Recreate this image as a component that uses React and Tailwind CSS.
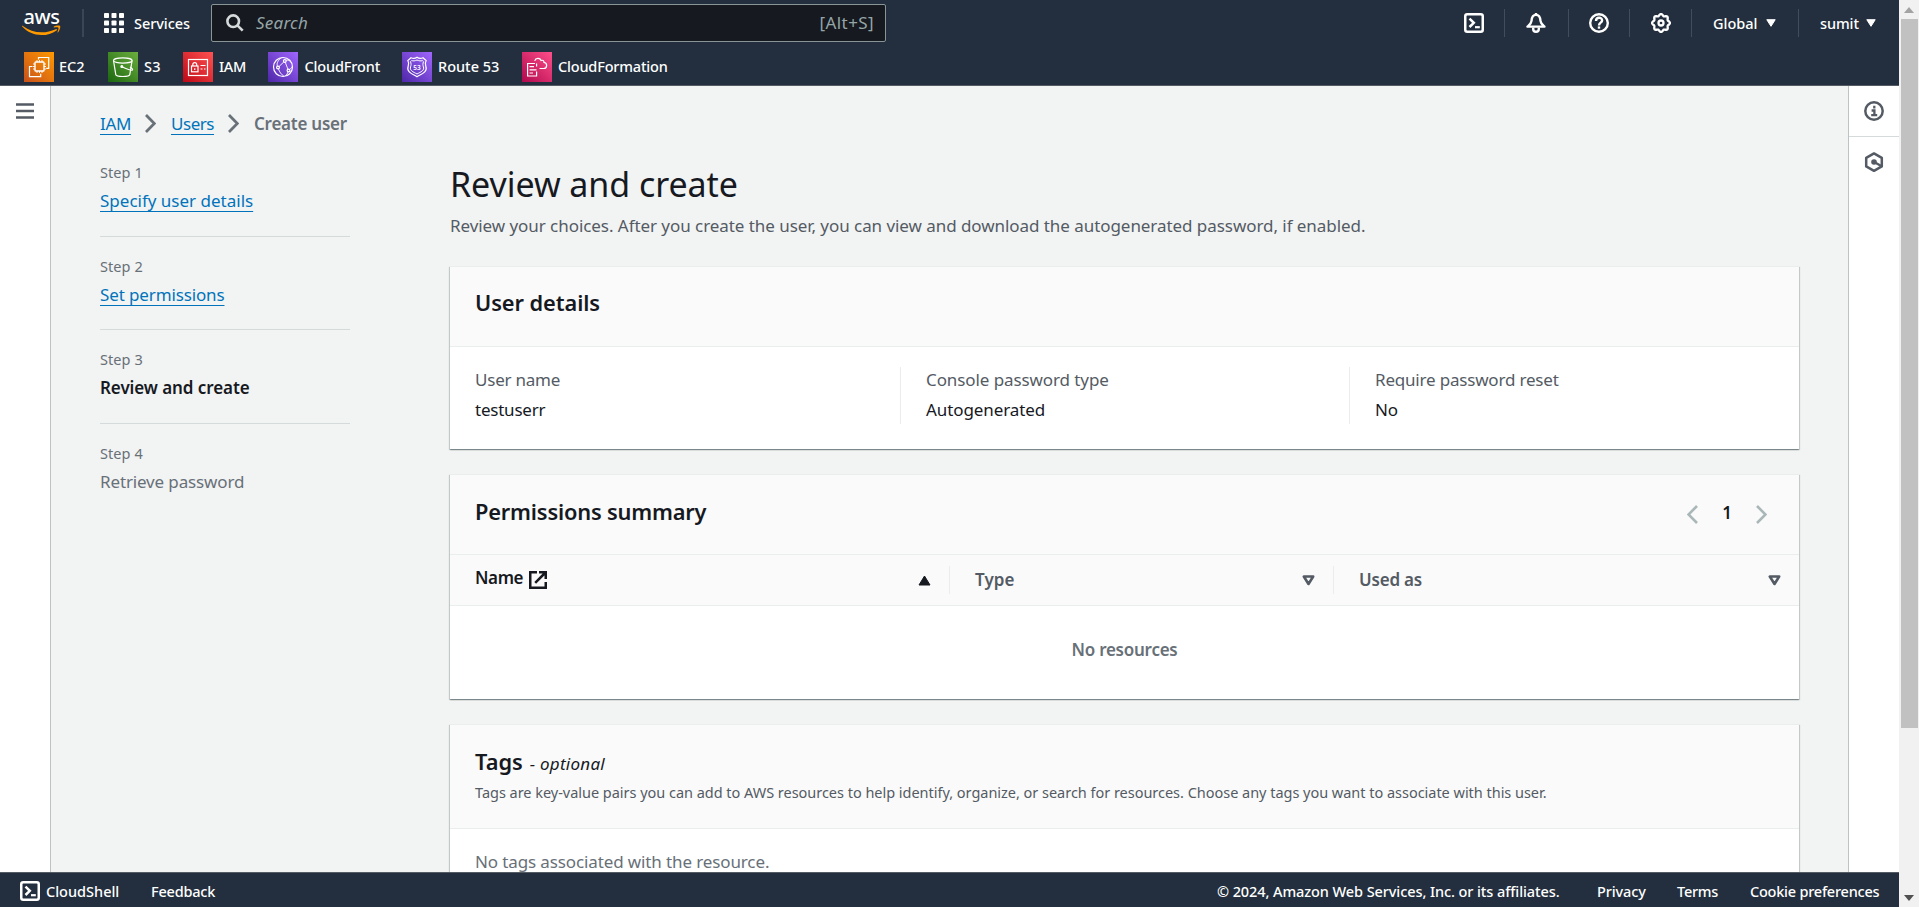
const gearPath = (() => {
  const points = [];
  for (let i = 0; i < 96; i += 1) {
    const a = (i / 96) * Math.PI * 2;
    const r = 8.1 + 0.85 * Math.cos(a * 8);
    points.push(`${(10 + r * Math.sin(a)).toFixed(2)} ${(10 - r * Math.cos(a)).toFixed(2)}`);
  }
  return `M${points.join('L')}Z`;
})();

/* ---------- glyph icons ---------- */

function AwsLogo() {
  return (
    <svg className="h-10 w-[42px] shrink-0" viewBox="0 -5 42 40">
      <text x="2.4" y="15.8" fill="#fff" fontSize="20" fontWeight="500" textLength="36.5" fontFamily="Noto Sans, sans-serif">
        aws
      </text>
      <path d="M1.2 18.6c5.2 5.6 11.6 8.5 19.2 8.5 5.6 0 10.8-1.7 15.2-4.7.9-.6.1-1.700-.9-1.200-4.600 2.100-9.200 3.100-13.900 3.100-7.300 0-13.300-2.200-18.900-6.300-.6-.4-1.100.1-.7.6z" fill="#ff9900" />
      <path d="M32.800 18.700c2.200-1.500 5.800-1.200 6.300-.7.500.6-.1 4.300-2 6.200-.4.400-.800.200-.600-.300.600-1.500 1.300-3.600.900-4.200-.5-.6-2.700-.4-4.200-.3-.6.100-.7-.4-.4-.7z" fill="#ff9900" />
    </svg>
  );
}

function GridIcon() {
  const stops = [0, 7.5, 15];
  return (
    <svg className="size-5" viewBox="0 0 20 20" fill="#fff">
      {stops.map((y) => stops.map((x) => <rect key={`${x}-${y}`} x={x} y={y} width="5" height="5" rx="0.8" />))}
    </svg>
  );
}

function SearchIcon() {
  return (
    <svg className="size-[18px]" viewBox="0 0 18 18" fill="none" stroke="#d5dbdb" strokeWidth="2.6">
      <circle cx="7.2" cy="7.2" r="5.8" />
      <path d="M11.4 11.4l5.300 5.300" />
    </svg>
  );
}

function ShellIcon() {
  return (
    <svg className="size-5" viewBox="0 0 20 20" fill="none" stroke="#fff" strokeWidth="2.5" strokeLinejoin="round">
      <rect x="1.25" y="1.25" width="17.5" height="17.5" rx="2" />
      <path d="M5.500 5.600l4.300 4.200-4.300 4.200" strokeLinejoin="miter" />
      <path d="M11 14.200h4.800" strokeWidth="2.2" />
    </svg>
  );
}

function BellIcon() {
  return (
    <svg className="size-5" viewBox="0 0 20 20" fill="none" stroke="#fff" strokeWidth="2.4" strokeLinejoin="round">
      <path d="M10 1.900C6.800 1.900 5.700 4.500 5.500 8 5.300 10.500 3.800 11.500 1.500 13.600H18.500C16.200 11.500 14.700 10.500 14.500 8 14.300 4.500 13.200 1.900 10 1.900Z" />
      <path d="M10 0v2.500" />
      <path d="M7.200 14.500v1.400a2.800 2.800 0 0 0 5.600 0v-1.400" />
    </svg>
  );
}

function HelpIcon() {
  return (
    <svg className="size-5" viewBox="0 0 20 20" fill="none" stroke="#fff" strokeWidth="2.4">
      <circle cx="10" cy="10" r="8.8" />
      <path d="M7 8c0-4.200 6.100-4.200 6.100-.600 0 2.300-3.100 2.200-3.100 5" />
      <path d="M10 13.400v2.300" />
    </svg>
  );
}

function GearIcon() {
  return (
    <svg className="size-5" viewBox="0 0 20 20" fill="none" stroke="#fff" strokeWidth="2.3">
      <path d={gearPath} />
      <circle cx="10" cy="10" r="2.500" />
    </svg>
  );
}

function InfoIcon() {
  return (
    <svg className="size-5" viewBox="0 0 20 20" fill="none" stroke="#545b64" strokeWidth="2.5">
      <circle cx="10" cy="10" r="8.7" />
      <path d="M10.300 4.800v2.600M7.600 9.500h2.800v4.600M7.200 14.100h6" strokeWidth="2.3" />
    </svg>
  );
}

function HexagonIcon() {
  return (
    <svg className="size-5" viewBox="0 0 20 20" fill="none" stroke="#545b64" strokeWidth="2.500" strokeLinejoin="round">
      <path d="M10 1.400l7.800 4.400v8.600L10 18.800l-7.800-4.400V5.800z" />
      <circle cx="10" cy="10" r="2.800" fill="#545b64" stroke="none" />
      <path d="M10 10l7.300 4" />
    </svg>
  );
}

function MenuIcon() {
  return (
    <svg className="h-4 w-[18px]" viewBox="0 0 18 16" stroke="#545b64" strokeWidth="2.5">
      <path d="M0 1.500h18M0 8h18M0 14.500h18" />
    </svg>
  );
}

function CaretIcon() {
  return (
    <svg className="h-2 w-2.5 shrink-0" viewBox="0 0 10 8" fill="#fff" stroke="#fff" strokeWidth="1" strokeLinejoin="round">
      <path d="M.8.7h8.400L5 7.300z" />
    </svg>
  );
}

function CrumbChevron() {
  return (
    <svg className="h-[19px] w-[11px] shrink-0" viewBox="0 0 11 19" fill="none" stroke="#687078" strokeWidth="2.700">
      <path d="M1 1l8.300 8.500L1 18" />
    </svg>
  );
}

function PageChevron({ flip }) {
  return (
    <svg className="h-[19px] w-[11px] shrink-0" viewBox="0 0 11 19" fill="none" stroke="#aab7b8" strokeWidth="2.600">
      <path d={flip ? 'M1 1l8.500 8.500L1 18' : 'M10 1L1.500 9.500 10 18'} />
    </svg>
  );
}

function ExternalIcon() {
  return (
    <svg className="size-[18px] shrink-0" viewBox="0 0 18 18" fill="none" stroke="#16191f" strokeWidth="2.500">
      <path d="M8 1.250H1.250v15.500h15.500V11" />
      <path d="M10 1.250h6.750V8M16.500 1.500L6.200 11.800" />
    </svg>
  );
}

function SortAscending() {
  return (
    <svg className="h-[11px] w-[13px] shrink-0" viewBox="0 0 13 11" fill="#16191f" stroke="#16191f" strokeLinejoin="round">
      <path d="M6.500 1L12 10H1z" />
    </svg>
  );
}

function SortIdle() {
  return (
    <svg className="h-[11px] w-[13px] shrink-0" viewBox="0 0 13 11" fill="none" stroke="#545b64" strokeWidth="2.600" strokeLinejoin="round">
      <path d="M1.800 1.500h9.400L6.500 9z" />
    </svg>
  );
}

/* ---------- service tiles ---------- */

function Tile({ id, from, to, children }) {
  return (
    <svg className="size-[30px] shrink-0" viewBox="0 0 30 30" fill="none" stroke="#fff" strokeWidth="1.2">
      <defs>
        <linearGradient id={id} x1="0" y1="1" x2="1" y2="0">
          <stop offset="0" stopColor={from} />
          <stop offset="1" stopColor={to} />
        </linearGradient>
      </defs>
      <rect width="30" height="30" fill={`url(#${id})`} stroke="none" />
      {children}
    </svg>
  );
}

function Ec2Tile() {
  return (
    <Tile id="ec2" from="#c8511b" to="#ff9900">
      <path d="M14.500 7.500v-2h10.200v10.800h-2.500M8.500 14.500h-3v10.200h11.200v-3" />
      <rect x="11" y="10" width="9" height="9" rx="0.8" strokeWidth="1.400" />
      <path d="M13 10V8M15.500 10V8M18 10V8M13 21v-2M15.500 21v-2M18 21v-2M11 12H9M11 14.500H9M11 17H9M22 12h-2M22 14.500h-2M22 17h-2" strokeWidth="0.9" />
    </Tile>
  );
}

function S3Tile() {
  return (
    <Tile id="s3" from="#1b660f" to="#6cae3e">
      <ellipse cx="14.800" cy="8.500" rx="9.300" ry="2.600" />
      <path d="M5.500 8.500l2.300 14.200c.4 2.400 13.600 2.400 14 0l2.300-14.200" />
      <path d="M14 14.700c4 2.200 9.800 4.200 10.500 3.200.5-.900-1-2-2.500-3" />
      <circle cx="13.800" cy="14.500" r="0.9" fill="#fff" />
    </Tile>
  );
}

function IamTile() {
  return (
    <Tile id="iam" from="#bd0816" to="#ff5252">
      <rect x="5.500" y="7.500" width="19" height="16" />
      <rect x="8.500" y="14" width="6.500" height="5.800" />
      <path d="M9.800 14v-1.500c0-2.600 3.900-2.600 3.900 0V14M11.750 16.200v1.800M17.500 13.500h5M17.500 17h2M21 17h1.500" />
    </Tile>
  );
}

function CloudFrontTile() {
  return (
    <Tile id="cloudfront" from="#4d27a8" to="#a166ff">
      <circle cx="15" cy="15" r="9.500" />
      <circle cx="16.800" cy="9" r="1.400" />
      <circle cx="10" cy="15.500" r="1.400" />
      <circle cx="20.500" cy="18.500" r="1.400" />
      <path d="M15.700 10.100l-4.600 4.300M17.300 10.400l2.600 6.800M13.500 5.700c-3.500 2.500-5 5.500-4.200 8.300M10.500 17c1 3 2.800 5.400 5.500 7.400M18 8.200c2-.2 3.500.300 4.500 1M20 20c-.5 1.500-1.200 2.700-2.500 4M21.500 17.500c1.500-1 2.300-2 2.800-3.200" strokeWidth="0.9" />
    </Tile>
  );
}

function Route53Tile() {
  return (
    <Tile id="route53" from="#4d27a8" to="#a166ff">
      <path d="M15 5.300c-2 1.400-3.800 1.500-6 .400L5.800 8.500c1.300 2.200 1.300 3.500.4 5.700-2.200 5.300 3.500 7.600 8.800 10.500 5.300-2.900 11-5.200 8.800-10.500-.9-2.200-.9-3.500.4-5.700L21 5.700c-2.200 1.100-4 1-6-.4z" />
      <path d="M15 8c-2 1-3.800 1.100-5.400.600L8.500 9.700c.8 1.800.7 3.500.1 5.200-1.200 3.600 2.400 4.900 6.400 7.100 4-2.200 7.600-3.500 6.400-7.100-.6-1.700-.7-3.400.1-5.200l-1.100-1.100C18.800 9.100 17 9 15 8z" strokeWidth="1" />
      <text x="15" y="17.600" fill="#fff" stroke="none" fontSize="6.500" fontWeight="600" textAnchor="middle" fontFamily="Noto Sans, sans-serif">
        53
      </text>
    </Tile>
  );
}

function CloudFormationTile() {
  return (
    <Tile id="cloudformation" from="#b0084d" to="#ff4f8b">
      <path d="M13 11.500H5.600v12.500h9v-4.500M14.600 11.500v3" />
      <path d="M7.500 14.700h4.500M7.500 17.800h7M7.500 21h3.500" />
      <path d="M12.700 8.800c.9-3 5.300-3.200 6.400-.3 1.600-.7 2.900.2 2.900 1.900 3.600.5 3.500 6.100-.2 6.100h-4.300" />
    </Tile>
  );
}

/* ---------- chrome ---------- */

function Divider() {
  return <span className="h-7 w-px shrink-0 bg-[#414d5c]" />;
}

const favorites = [
  { name: 'EC2', icon: <Ec2Tile />, item: 'w-[84px] gap-[5px]', text: '' },
  { name: 'S3', icon: <S3Tile />, item: 'w-[75px] gap-[6px]', text: 'tracking-[0.2px]' },
  { name: 'IAM', icon: <IamTile />, item: 'w-[85px] gap-[6px]', text: 'tracking-[-0.3px]' },
  { name: 'CloudFront', icon: <CloudFrontTile />, item: 'w-[134px] gap-[6.5px]', text: 'tracking-[-0.15px]' },
  { name: 'Route 53', icon: <Route53Tile />, item: 'w-[120px] gap-[6px]', text: '' },
  { name: 'CloudFormation', icon: <CloudFormationTile />, item: 'gap-[6px]', text: 'tracking-[-0.18px]' },
];

function TopNav() {
  return (
    <header className="h-[86px] shrink-0 border-b border-[#545b64] bg-[#232f3e] text-[14.5px] leading-5 font-medium text-white">
      <div className="flex h-[46px] items-center pl-[21px]">
        <AwsLogo />
        <span className="ml-[19px] h-7 w-0.5 bg-[#3b4654]" />
        <div className="ml-5 flex w-[107px] items-center gap-2.5">
          <GridIcon />
          <span className="tracking-[-0.06px]">Services</span>
        </div>
        <div className="flex h-[38px] w-[675px] items-center justify-between rounded-[2px] border border-[#879596] bg-[#16191f] pr-[11px] pl-[14px] text-[17px] leading-[27px] font-normal">
          <div className="flex items-center gap-3">
            <SearchIcon />
            <span className="pb-px tracking-[0.23px] text-[#95a5a6] italic">Search</span>
          </div>
          <span className="pb-px tracking-[0.4px] text-[#95a5a6]">[Alt+S]</span>
        </div>
        <div className="ml-auto flex items-center">
          <ShellIcon />
          <span className="ml-5 flex"><Divider /></span>
          <span className="ml-[21px] flex"><BellIcon /></span>
          <span className="ml-[22px] flex"><Divider /></span>
          <span className="ml-5 flex"><HelpIcon /></span>
          <span className="ml-5 flex"><Divider /></span>
          <span className="ml-[21px] flex"><GearIcon /></span>
          <span className="ml-5 flex"><Divider /></span>
          <div className="ml-[21px] flex w-[85px] items-center">
            <span className="w-[53px]">Global</span>
            <CaretIcon />
          </div>
          <Divider />
          <div className="ml-[21px] flex w-[79px] items-center">
            <span className="w-[46px] tracking-[-0.1px]">sumit</span>
            <CaretIcon />
          </div>
        </div>
      </div>
      <nav className="flex h-[39px] items-center pt-[3px] pl-6">
        {favorites.map((f) => (
          <div key={f.name} className={`flex items-center ${f.item}`}>
            {f.icon}
            <span className={`pb-0.5 whitespace-nowrap ${f.text}`}>{f.name}</span>
          </div>
        ))}
      </nav>
    </header>
  );
}

const linkClass = 'text-[#0073bb] underline decoration-1 underline-offset-[4px] [text-decoration-skip-ink:none]';

const steps = [
  { label: 'Step 1', title: 'Specify user details', item: 'h-[75px] border-b', text: linkClass },
  { label: 'Step 2', title: 'Set permissions', item: 'h-[93px] border-b pt-[19px]', text: `${linkClass} tracking-[-0.13px]` },
  { label: 'Step 3', title: 'Review and create', item: 'h-[94px] border-b pt-[19px]', text: 'font-semibold text-[#16191f] tracking-[-0.08px]' },
  { label: 'Step 4', title: 'Retrieve password', item: 'pt-[19px]', text: 'text-[#687078] tracking-[-0.14px]' },
];

function Steps() {
  return (
    <nav className="w-[250px] shrink-0">
      {steps.map((s) => (
        <div key={s.label} className={`border-[#d5dbdb] ${s.item}`}>
          <div className="text-[14.5px] leading-5 tracking-[0.08px] text-[#687078]">{s.label}</div>
          <div className="mt-[5px] leading-[27px]">
            <span className={s.text}>{s.title}</span>
          </div>
        </div>
      ))}
    </nav>
  );
}

function Card({ className, children }) {
  return (
    <section
      className={`border-t border-[#eaeded] bg-white shadow-[0_1px_1px_0_rgba(0,28,36,0.3),1px_1px_1px_0_rgba(0,28,36,0.15),-1px_1px_1px_0_rgba(0,28,36,0.15)] ${className}`}
    >
      {children}
    </section>
  );
}

const details = [
  { label: 'User name', value: 'testuserr', item: 'w-[425px]', text: 'tracking-[-0.22px]' },
  { label: 'Console password type', value: 'Autogenerated', item: 'w-[449px] border-l pl-[25px]', text: 'tracking-[-0.09px]' },
  { label: 'Require password reset', value: 'No', item: 'border-l pl-[25px]', text: 'tracking-[-0.19px]' },
];

function UserDetails() {
  return (
    <Card className="mt-[27px] h-[183px]">
      <div className="h-20 border-b border-[#eaeded] bg-[#fafafa] pt-[21px] pl-[25px]">
        <h2 className="text-[21.8px] leading-[29px] font-semibold tracking-[-0.08px]">User details</h2>
      </div>
      <div className="flex pt-5 pl-[25px]">
        {details.map((d) => (
          <div key={d.label} className={`h-[57px] border-[#eaeded] ${d.item}`}>
            <div className={`-mt-px leading-[27px] text-[#545b64] ${d.text}`}>{d.label}</div>
            <div className={`mt-[3px] leading-[27px] ${d.text}`}>{d.value}</div>
          </div>
        ))}
      </div>
    </Card>
  );
}

function PermissionsSummary() {
  return (
    <Card className="mt-[25px] h-[225px]">
      <div className="flex h-20 justify-between border-b border-[#eaeded] bg-[#fafafa] pt-[22px] pr-8 pl-[25px]">
        <h2 className="text-[21.8px] leading-[29px] font-semibold tracking-[-0.18px]">Permissions summary</h2>
        <div className="mt-[7px] flex h-5 items-center">
          <PageChevron />
          <span className="w-[58px] pb-1 text-center leading-[27px] font-semibold">1</span>
          <PageChevron flip />
        </div>
      </div>
      <div className="flex h-[51px] items-center border-b border-[#eaeded] bg-[#fafafa] pl-[25px] font-semibold">
        <div className="flex w-[474px] items-center pr-[18px]">
          <span className="mr-[5px] w-[49px] pb-[5px] leading-[27px] tracking-[-0.4px]">Name</span>
          <ExternalIcon />
          <span className="ml-auto flex"><SortAscending /></span>
        </div>
        <div className="flex h-7 w-96 items-center border-l border-[#eaeded] pr-[18px] pl-[25px]">
          <span className="pb-0.5 leading-[27px] tracking-[0.1px] text-[#545b64]">Type</span>
          <span className="ml-auto flex"><SortIdle /></span>
        </div>
        <div className="flex h-7 flex-1 items-center border-l border-[#eaeded] pr-[18px] pl-[25px]">
          <span className="pb-0.5 leading-[27px] tracking-[-0.2px] text-[#545b64]">Used as</span>
          <span className="ml-auto flex"><SortIdle /></span>
        </div>
      </div>
      <div className="pt-[30px] text-center leading-[27px] font-semibold tracking-[-0.25px] text-[#687078]">No resources</div>
    </Card>
  );
}

function Tags() {
  return (
    <Card className="mt-[25px] h-[250px]">
      <div className="h-[104px] border-b border-[#eaeded] bg-[#fafafa] pt-[22px] pl-[25px]">
        <h2 className="flex h-[29px] items-baseline gap-[7px] leading-[29px]">
          <span className="text-[21.8px] font-semibold">Tags</span>
          <span className="tracking-[0.25px] italic">- optional</span>
        </h2>
        <p className="mt-1.5 text-[14.5px] leading-5 tracking-[-0.025px] text-[#545b64]">
          Tags are key-value pairs you can add to AWS resources to help identify, organize, or search for resources. Choose any tags you want to associate with this user.
        </p>
      </div>
      <p className="pt-[19px] pl-[25px] leading-[27px] tracking-[-0.12px] text-[#687078]">No tags associated with the resource.</p>
    </Card>
  );
}

function Footer() {
  return (
    <footer className="flex h-[35px] shrink-0 items-center border-t border-[#545b64] bg-[#232f3e] pt-px pl-5 text-[14.5px] leading-5 font-medium whitespace-nowrap text-white">
      <ShellIcon />
      <span className="ml-1.5 w-[105px]">CloudShell</span>
      <span className="tracking-[-0.22px]">Feedback</span>
      <div className="ml-auto flex">
        <span className="w-[380px] tracking-[-0.09px]">© 2024, Amazon Web Services, Inc. or its affiliates.</span>
        <span className="w-20 tracking-[-0.13px]">Privacy</span>
        <span className="w-[73px] tracking-[-0.25px]">Terms</span>
        <span className="w-[149px] tracking-[-0.23px]">Cookie preferences</span>
      </div>
    </footer>
  );
}

function Scrollbar() {
  return (
    <div className="flex w-5 shrink-0 flex-col items-center bg-[#f1f1f1]">
      <div className="flex h-[19px] items-center">
        <svg className="h-1.5 w-2.5" viewBox="0 0 10 6" fill="#a3a3a3"><path d="M5 0l5 6H0z" /></svg>
      </div>
      <div className="h-[709px] w-[17px] bg-[#c1c1c1]" />
      <div className="mt-auto flex h-[19px] items-center">
        <svg className="h-1.5 w-2.5" viewBox="0 0 10 6" fill="#505050"><path d="M0 0h10L5 6z" /></svg>
      </div>
    </div>
  );
}

export default function App() {
  return (
    <div className="flex h-[907px] w-[1919px] overflow-hidden bg-white font-['Noto_Sans',sans-serif] text-[17px] text-[#16191f]">
      <div className="flex w-[1899px] flex-col">
        <TopNav />
        <div className="flex min-h-0 flex-1">
          <aside className="w-[51px] shrink-0 border-r border-[#bcc3c4] bg-white pt-[17px] pl-4">
            <MenuIcon />
          </aside>
          <main className="min-w-0 flex-1 overflow-hidden bg-[#f2f3f3] pt-6 pl-[49px]">
            <div className="flex items-center leading-[27px]">
              <span className={`w-[31px] tracking-[-0.33px] ${linkClass}`}>IAM</span>
              <span className="mr-[15px] ml-[14px]"><CrumbChevron /></span>
              <span className={`w-[43px] tracking-[-0.46px] ${linkClass}`}>Users</span>
              <span className="mr-[15px] ml-[14px]"><CrumbChevron /></span>
              <span className="font-semibold tracking-[-0.24px] text-[#687078]">Create user</span>
            </div>
            <div className="mt-[25px] flex gap-[100px]">
              <Steps />
              <div className="w-[1349px] shrink-0">
                <h1 className="text-[34px] leading-[44px] tracking-[-0.06px]">Review and create</h1>
                <p className="mt-1.5 leading-[27px] tracking-[-0.055px] text-[#545b64]">
                  Review your choices. After you create the user, you can view and download the autogenerated password, if enabled.
                </p>
                <UserDetails />
                <PermissionsSummary />
                <Tags />
              </div>
            </div>
          </main>
          <aside className="w-[51px] shrink-0 border-l border-[#bcc3c4] bg-white">
            <div className="flex h-[51px] items-center justify-center border-b border-[#d5dbdb]"><InfoIcon /></div>
            <div className="flex h-[49px] items-center justify-center"><HexagonIcon /></div>
          </aside>
        </div>
        <Footer />
      </div>
      <Scrollbar />
    </div>
  );
}
